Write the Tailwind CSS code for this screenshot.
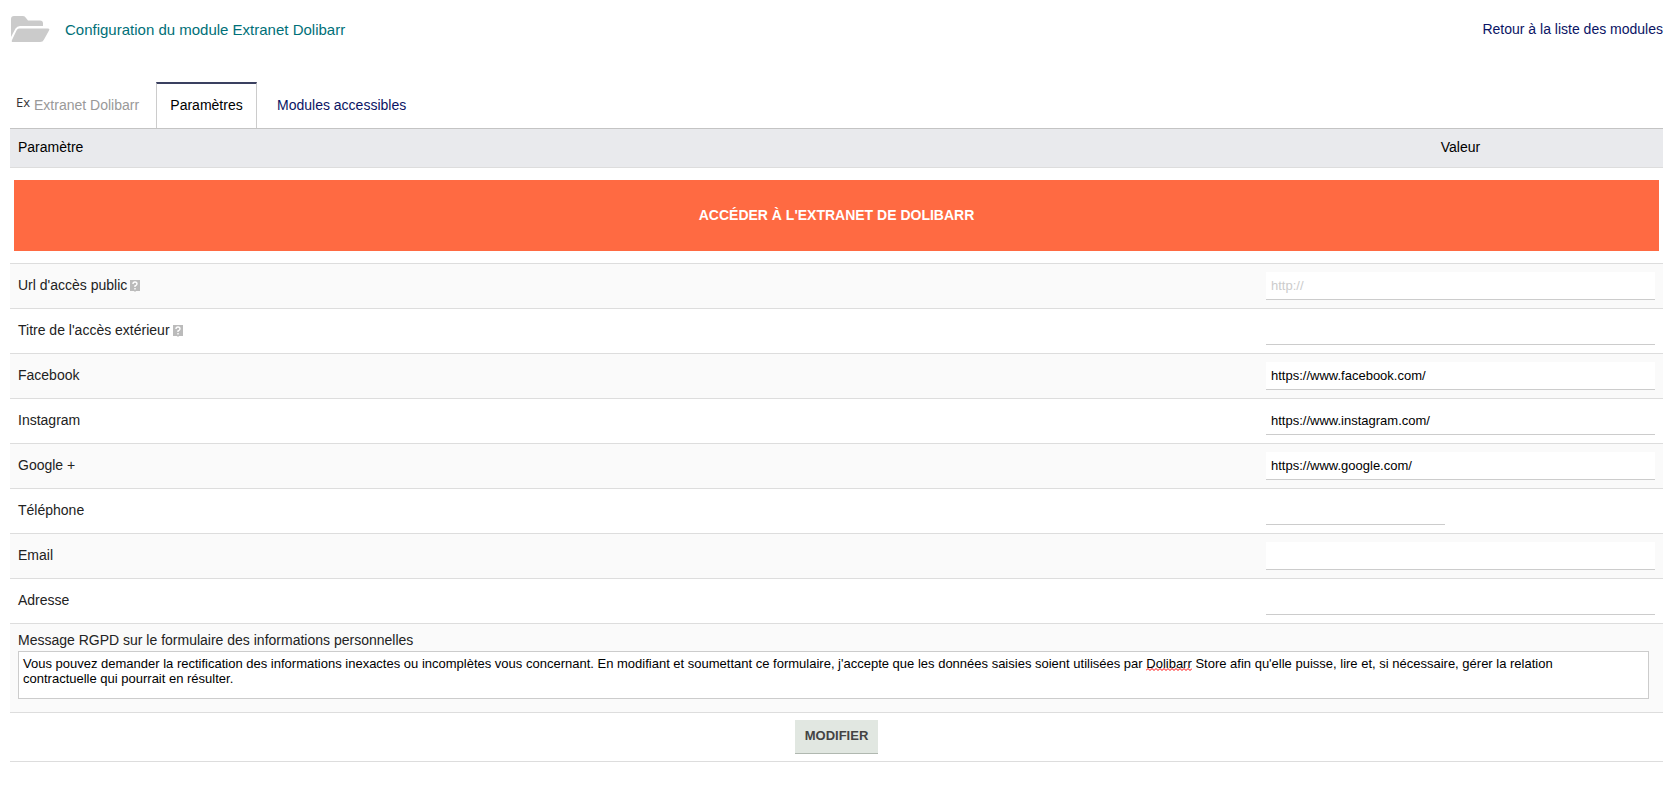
<!DOCTYPE html>
<html lang="fr">
<head>
    <meta charset="UTF-8">
    <meta name="viewport" content="width=device-width, initial-scale=1.0">
    <title>Configuration du module Extranet Dolibarr</title>
    <script src="https://cdn.jsdelivr.net/npm/@tailwindcss/browser@4"></script>
</head>
<body class="bg-white font-['Liberation_Sans',Arial,sans-serif] text-sm text-[#222] pl-[10px] pr-[13px]">

    <header class="flex items-center justify-between h-[58px]">
        <div class="flex items-center gap-[15px]">
            <svg class="w-10 h-7" viewBox="0 0 40 28" fill="#cbcbcb" aria-hidden="true">
                <path d="M1 22V4Q1 1 4 1H13Q15 1 16 3L18 5.500H30Q33 5.500 33 8.500V11H10Q7 11 5.500 13.500Z"/>
                <path d="M9 13.500H38Q40 13.500 39 15.500L34 24.500Q33 27 30 27H3Q1 27 2 25L6.500 15.500Q7.500 13.500 9 13.500Z"/>
            </svg>
            <h1 class="pt-0.5 text-[15px] text-[#007078]">Configuration du module Extranet Dolibarr</h1>
        </div>
        <a href="#" class="text-[#0a1464]">Retour à la liste des modules</a>
    </header>

    <nav class="flex items-stretch h-[46px] mt-6">
        <div class="flex items-center gap-1 pl-1.5 w-[146px] text-[#999]">
            <span class="font-['Open_Sans'] text-[13px] text-[#333] pb-1.5">Ex</span>
            <span>Extranet Dolibarr</span>
        </div>
        <a href="#" class="flex items-center justify-center w-[101px] pb-0.5 border-x border-x-[#ccc] border-t-2 border-t-[#3a4060] text-black">Paramètres</a>
        <a href="#" class="flex items-center px-5 text-[#0a1464]">Modules accessibles</a>
    </nav>

    <form>
        <table class="w-full table-fixed border-collapse">
            <colgroup>
                <col>
                <col class="w-[405px]">
            </colgroup>
            <thead>
                <tr class="h-[39px] bg-[#e9eaed] border-t border-t-[#c4c4c4] border-b border-b-[#ddd] text-black">
                    <th class="px-2 pb-0.5 text-left font-normal">Paramètre</th>
                    <th class="px-2 pb-0.5 font-normal">Valeur</th>
                </tr>
            </thead>
            <tbody>
                <tr class="border-b border-[#ddd]">
                    <td colspan="2" class="px-1 py-3">
                        <a href="#" class="flex items-center justify-center h-[71px] pb-0.5 bg-[#ff6a42] font-bold text-white uppercase">Accéder à l'extranet de Dolibarr</a>
                    </td>
                </tr>
                <tr class="h-[45px] bg-[#fafafa] border-b border-[#ddd]">
                    <td class="px-2 pb-0.5">
                        <div class="flex items-center gap-0.5">
                            <label for="public-url">Url d'accès public</label>
                            <svg class="w-3 h-3 mt-0.5" viewBox="0 0 12 12" aria-hidden="true">
                                <path d="M1 0H11V11H7L6 12L5 11H1Z" fill="#bbb"/>
                                <path d="M4 4Q4 2 6 2T8 4Q8 5 6 6V7M6 8V9.500" fill="none" stroke="#fff" stroke-width="1.400"/>
                            </svg>
                        </div>
                    </td>
                    <td class="px-2"><input id="public-url" type="text" placeholder="http://" class="block w-full h-7 px-[5px] bg-white border-b border-[#ccc] text-[13px] text-black placeholder:text-[#ccc]"></td>
                </tr>
                <tr class="h-[45px] border-b border-[#ddd]">
                    <td class="px-2 pb-0.5">
                        <div class="flex items-center gap-0.5">
                            <label for="public-title">Titre de l'accès extérieur</label>
                            <svg class="w-3 h-3 mt-0.5" viewBox="0 0 12 12" aria-hidden="true">
                                <path d="M1 0H11V11H7L6 12L5 11H1Z" fill="#bbb"/>
                                <path d="M4 4Q4 2 6 2T8 4Q8 5 6 6V7M6 8V9.500" fill="none" stroke="#fff" stroke-width="1.400"/>
                            </svg>
                        </div>
                    </td>
                    <td class="px-2"><input id="public-title" type="text" class="block w-full h-7 px-[5px] bg-white border-b border-[#ccc] text-[13px] text-black"></td>
                </tr>
                <tr class="h-[45px] bg-[#fafafa] border-b border-[#ddd]">
                    <td class="px-2 pb-0.5"><label for="facebook">Facebook</label></td>
                    <td class="px-2"><input id="facebook" type="text" value="https://www.facebook.com/" class="block w-full h-7 px-[5px] bg-white border-b border-[#ccc] text-[13px] text-black"></td>
                </tr>
                <tr class="h-[45px] border-b border-[#ddd]">
                    <td class="px-2 pb-0.5"><label for="instagram">Instagram</label></td>
                    <td class="px-2"><input id="instagram" type="text" value="https://www.instagram.com/" class="block w-full h-7 px-[5px] bg-white border-b border-[#ccc] text-[13px] text-black"></td>
                </tr>
                <tr class="h-[45px] bg-[#fafafa] border-b border-[#ddd]">
                    <td class="px-2 pb-0.5"><label for="google">Google +</label></td>
                    <td class="px-2"><input id="google" type="text" value="https://www.google.com/" class="block w-full h-7 px-[5px] bg-white border-b border-[#ccc] text-[13px] text-black"></td>
                </tr>
                <tr class="h-[45px] border-b border-[#ddd]">
                    <td class="px-2 pb-0.5"><label for="phone">Téléphone</label></td>
                    <td class="px-2"><input id="phone" type="tel" class="block w-[179px] h-7 px-[5px] bg-white border-b border-[#ccc] text-[13px] text-black"></td>
                </tr>
                <tr class="h-[45px] bg-[#fafafa] border-b border-[#ddd]">
                    <td class="px-2 pb-0.5"><label for="email">Email</label></td>
                    <td class="px-2"><input id="email" type="email" class="block w-full h-7 px-[5px] bg-white border-b border-[#ccc] text-[13px] text-black"></td>
                </tr>
                <tr class="h-[45px] border-b border-[#ddd]">
                    <td class="px-2 pb-0.5"><label for="address">Adresse</label></td>
                    <td class="px-2"><input id="address" type="text" class="block w-full h-7 px-[5px] bg-white border-b border-[#ccc] text-[13px] text-black"></td>
                </tr>
                <tr class="bg-[#fafafa] border-b border-[#ddd]">
                    <td colspan="2" class="pl-2 pr-3.5 pt-1.5 pb-[13px]">
                        <label for="rgpd" class="block mb-px">Message RGPD sur le formulaire des informations personnelles</label>
                        <div class="relative">
                            <textarea id="rgpd" class="block w-full h-12 pl-1 pr-7 py-1 resize-none bg-white border border-[#ccc] text-[13px] leading-[15px] text-black">Vous pouvez demander la rectification des informations inexactes ou incomplètes vous concernant. En modifiant et soumettant ce formulaire, j'accepte que les données saisies soient utilisées par Dolibarr Store afin qu'elle puisse, lire et, si nécessaire, gérer la relation contractuelle qui pourrait en résulter.</textarea>
                            <!-- spelling mark under "Dolibarr" -->
                            <svg class="absolute left-[1128px] top-[17px] w-[46px] h-[3px] pointer-events-none" viewBox="0 0 46 3" fill="none" stroke="#f00" aria-hidden="true">
                                <path d="M0 2.500L2 .5L4 2.500L6 .5L8 2.500L10 .5L12 2.500L14 .5L16 2.500L18 .5L20 2.500L22 .5L24 2.500L26 .5L28 2.500L30 .5L32 2.500L34 .5L36 2.500L38 .5L40 2.500L42 .5L44 2.500L46 .5"/>
                            </svg>
                        </div>
                    </td>
                </tr>
                <tr class="border-b border-[#ddd]">
                    <td colspan="2" class="py-[7px]">
                        <button type="submit" class="block mx-auto h-[34px] px-2.5 bg-[#e1e7e1] border-b border-[#b0b8b0] text-[13px] font-bold text-[#444] uppercase cursor-pointer">Modifier</button>
                    </td>
                </tr>
            </tbody>
        </table>
    </form>

</body>
</html>
